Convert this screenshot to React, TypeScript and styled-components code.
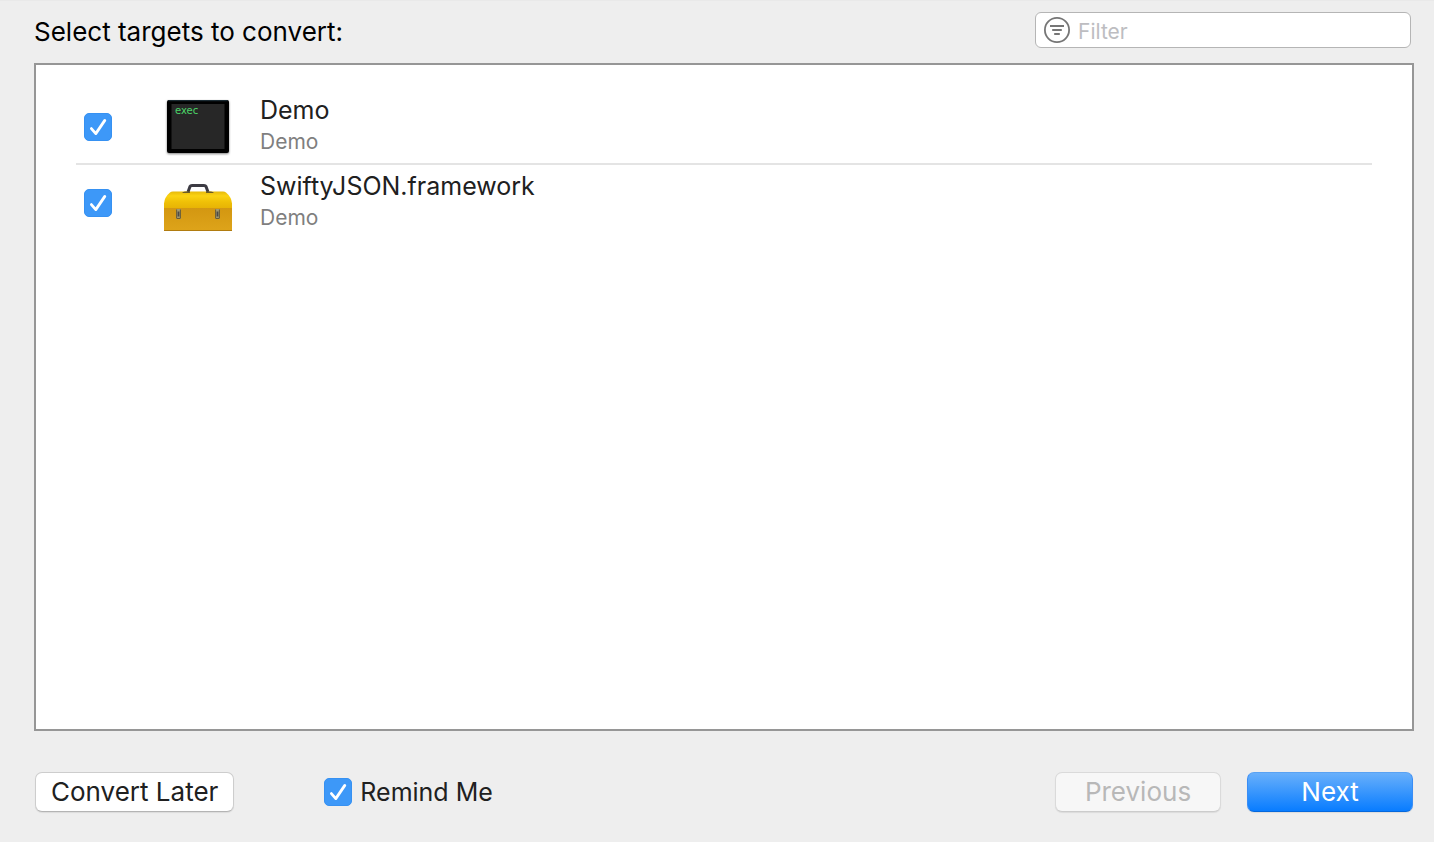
import React from "react";
import styled, { createGlobalStyle, css } from "styled-components";

const GlobalStyle = createGlobalStyle`
  *, *::before, *::after { box-sizing: border-box; }
  body {
    margin: 0;
    background: #eeeeee;
    color: #202020;
    font-family: Inter, "Liberation Sans", sans-serif;
    font-size: 25px;
    line-height: 32px;
  }
  button, input { font: inherit; color: inherit; }
`;

const Sheet = styled.main`
  min-height: 100vh;
  display: flex;
  flex-direction: column;
  padding: 11px 20px 30px 34px;
  border-top: 1px solid #e9e9e9;
`;

const Header = styled.header`
  display: flex;
  align-items: center;
  justify-content: space-between;
  gap: 24px;
  padding-right: 3px;
`;

const Title = styled.h1`
  margin: 0;
  padding-top: 4px;
  font-size: 26px;
  font-weight: 400;
  color: #000;
`;

const FilterField = styled.label`
  display: flex;
  align-items: center;
  gap: 8px;
  flex: 0 1 376px;
  min-width: 0;
  height: 36px;
  padding: 0 8px;
  background: #fff;
  border: 1px solid #b5b5b5;
  border-radius: 6px;
`;

const FilterInput = styled.input`
  flex: 1;
  width: 100%;
  min-width: 0;
  height: 34px;
  padding: 3px 0 0;
  border: 0;
  outline: 0;
  background: none;
  font-size: 21px;
  line-height: 30px;
  &::placeholder { color: #bdbdc1; opacity: 1; }
`;

const TargetList = styled.ul`
  flex: 1;
  margin: 15px 0 41px;
  padding: 24px 40px;
  list-style: none;
  background: #fff;
  border: 2px solid #969696;
`;

const TargetRow = styled.li`
  border-bottom: 2px solid #e4e4e4;
  &:last-child { border-bottom: 0; }
`;

const TargetLabel = styled.label`
  display: flex;
  align-items: center;
  height: 74px;
  padding: 2px 8px 0;
`;

const TargetIcon = styled.svg`
  flex: none;
  width: 72px;
  height: 72px;
  margin: 0 26px 0 50px;
`;

const TargetText = styled.span`
  display: flex;
  flex-direction: column;
  padding-bottom: 2px;
`;

const TargetProject = styled.span`
  font-size: 21px;
  line-height: 32px;
  color: #7f7f7f;
`;

const TickWrap = styled.span`
  display: grid;
  flex: none;
  width: 28px;
  height: 28px;
  & > * { grid-area: 1 / 1; }
`;

const TickInput = styled.input`
  appearance: none;
  width: 28px;
  height: 28px;
  margin: 0;
  border-radius: 5px;
  background: #fff;
  border: 1px solid #b5b5b5;
  &:checked { background: #3d98f8; border-color: #3691f2; }
  & + svg { visibility: hidden; }
  &:checked + svg { visibility: visible; }
`;

const TickMark = styled.svg`
  width: 28px;
  height: 28px;
  pointer-events: none;
`;

const Footer = styled.footer`
  display: flex;
  align-items: center;
  padding: 0 1px;
`;

const PushButton = styled.button<{ $primary?: boolean }>`
  min-width: 166px;
  height: 40px;
  padding: 0 15px;
  border: 1px solid #cdcdcd;
  border-bottom-color: #b4b4b4;
  border-radius: 7px;
  background: #fff;
  box-shadow: 0 1px 1px rgba(0, 0, 0, 0.08);
  font-size: 26px;
  line-height: 32px;
  &:disabled {
    color: #b8b8b8;
    background: #f7f7f7;
    border-color: #dadada;
    border-bottom-color: #cccccc;
  }
  ${(p) =>
    p.$primary &&
    css`
      color: #fff;
      background: linear-gradient(#6bb1fb, #067bff) border-box;
      border-color: #59a2f3 #3a8df5 #0568dc;
    `}
`;

const RemindLabel = styled.label`
  display: flex;
  align-items: center;
  gap: 8px;
  margin-left: 90px;
`;

const Actions = styled.div`
  display: flex;
  gap: 26px;
  margin-left: auto;
`;

function Tick() {
  return (
    <TickWrap>
      <TickInput type="checkbox" defaultChecked />
      <TickMark viewBox="0 0 28 28" fill="none" aria-hidden="true">
        <path d="M7.4 15.6 11.8 20.6 20.8 7.4" stroke="#fff" strokeWidth="2.8" strokeLinecap="round" strokeLinejoin="round" />
      </TickMark>
    </TickWrap>
  );
}

function FilterIcon() {
  return (
    <svg width="26" height="26" viewBox="0 0 26 26" fill="none" stroke="#767676" aria-hidden="true">
      <circle cx="13" cy="13" r="12.1" strokeWidth="1.8" />
      <path d="M6 9h14M8.2 13h9.6M10.2 17h5.6" strokeWidth="1.8" />
    </svg>
  );
}

function ExecIcon() {
  return (
    <TargetIcon viewBox="0 0 72 72" aria-hidden="true">
      <defs>
        <filter id="execShadow" x="-10%" y="-10%" width="120%" height="125%">
          <feDropShadow dx="0" dy="1" stdDeviation="1" floodOpacity="0.5" />
        </filter>
      </defs>
      <rect x="5" y="9" width="62" height="53" rx="2" fill="#020405" filter="url(#execShadow)" />
      <path d="M6.5 9.7h59" stroke="#1b2b33" strokeWidth="1.2" />
      <rect x="9.5" y="13" width="53" height="45" fill="#272727" />
      <text x="13" y="23" fontFamily="'DejaVu Sans', sans-serif" fontSize="10" fill="#4bd468">exec</text>
    </TargetIcon>
  );
}

function Latch({ x }: { x: number }) {
  return (
    <g>
      <rect x={x} y="42" width="5" height="10" rx="1" fill="#a39a72" />
      <path d={`M${x + 0.6} 42.5v9M${x + 4.4} 42.5v9M${x + 1} 51.5h3`} stroke="#6a5c34" strokeWidth="1" />
      <rect x={x + 1.6} y="44.5" width="1.8" height="5" fill="#4d4a48" />
    </g>
  );
}

function ToolboxIcon() {
  return (
    <TargetIcon viewBox="0 0 72 72" aria-hidden="true">
      <defs>
        <linearGradient id="lid" x1="0" y1="0" x2="0" y2="1">
          <stop offset="0" stopColor="#e6b90c" />
          <stop offset="0.25" stopColor="#fbd313" />
          <stop offset="0.6" stopColor="#efc007" />
          <stop offset="1" stopColor="#e6b205" />
        </linearGradient>
        <linearGradient id="box" x1="0" y1="0" x2="0" y2="1">
          <stop offset="0" stopColor="#d39711" />
          <stop offset="1" stopColor="#dea41a" />
        </linearGradient>
      </defs>
      <path d="M8 25.5Q9 24.500 11 24.500H61Q63 24.500 64 25.500Q69.5 30 70 36.5V42H2V36.5Q2.5 30 8 25.500Z" fill="url(#lid)" />
      <rect x="2" y="41" width="68" height="23" fill="url(#box)" />
      <path d="M2 63.5H70" stroke="#b17c10" />
      <path d="M26 25 28 19.500Q28.5 18.500 30 18.500H42Q43.5 18.500 44 19.500L46 25" fill="none" stroke="#3c3b43" strokeWidth="3" strokeLinejoin="round" />
      <path d="M20 26q1-1.5 3-1.5h5v1.500zM44 26v-1.500h5q2 0 3 1.500z" fill="#6b5b25" />
      <Latch x={14} />
      <Latch x={53} />
    </TargetIcon>
  );
}

const targets = [
  { name: "Demo", project: "Demo", Icon: ExecIcon },
  { name: "SwiftyJSON.framework", project: "Demo", Icon: ToolboxIcon },
];

export default function App() {
  return (
    <>
      <GlobalStyle />
      <Sheet>
        <Header>
          <Title>Select targets to convert:</Title>
          <FilterField>
            <FilterIcon />
            <FilterInput type="text" placeholder="Filter" aria-label="Filter" />
          </FilterField>
        </Header>
        <TargetList>
          {targets.map(({ name, project, Icon }) => (
            <TargetRow key={name}>
              <TargetLabel>
                <Tick />
                <Icon />
                <TargetText>
                  <span>{name}</span>
                  <TargetProject>{project}</TargetProject>
                </TargetText>
              </TargetLabel>
            </TargetRow>
          ))}
        </TargetList>
        <Footer>
          <PushButton type="button">Convert Later</PushButton>
          <RemindLabel>
            <Tick />
            Remind Me
          </RemindLabel>
          <Actions>
            <PushButton type="button" disabled>Previous</PushButton>
            <PushButton type="button" $primary>Next</PushButton>
          </Actions>
        </Footer>
      </Sheet>
    </>
  );
}
